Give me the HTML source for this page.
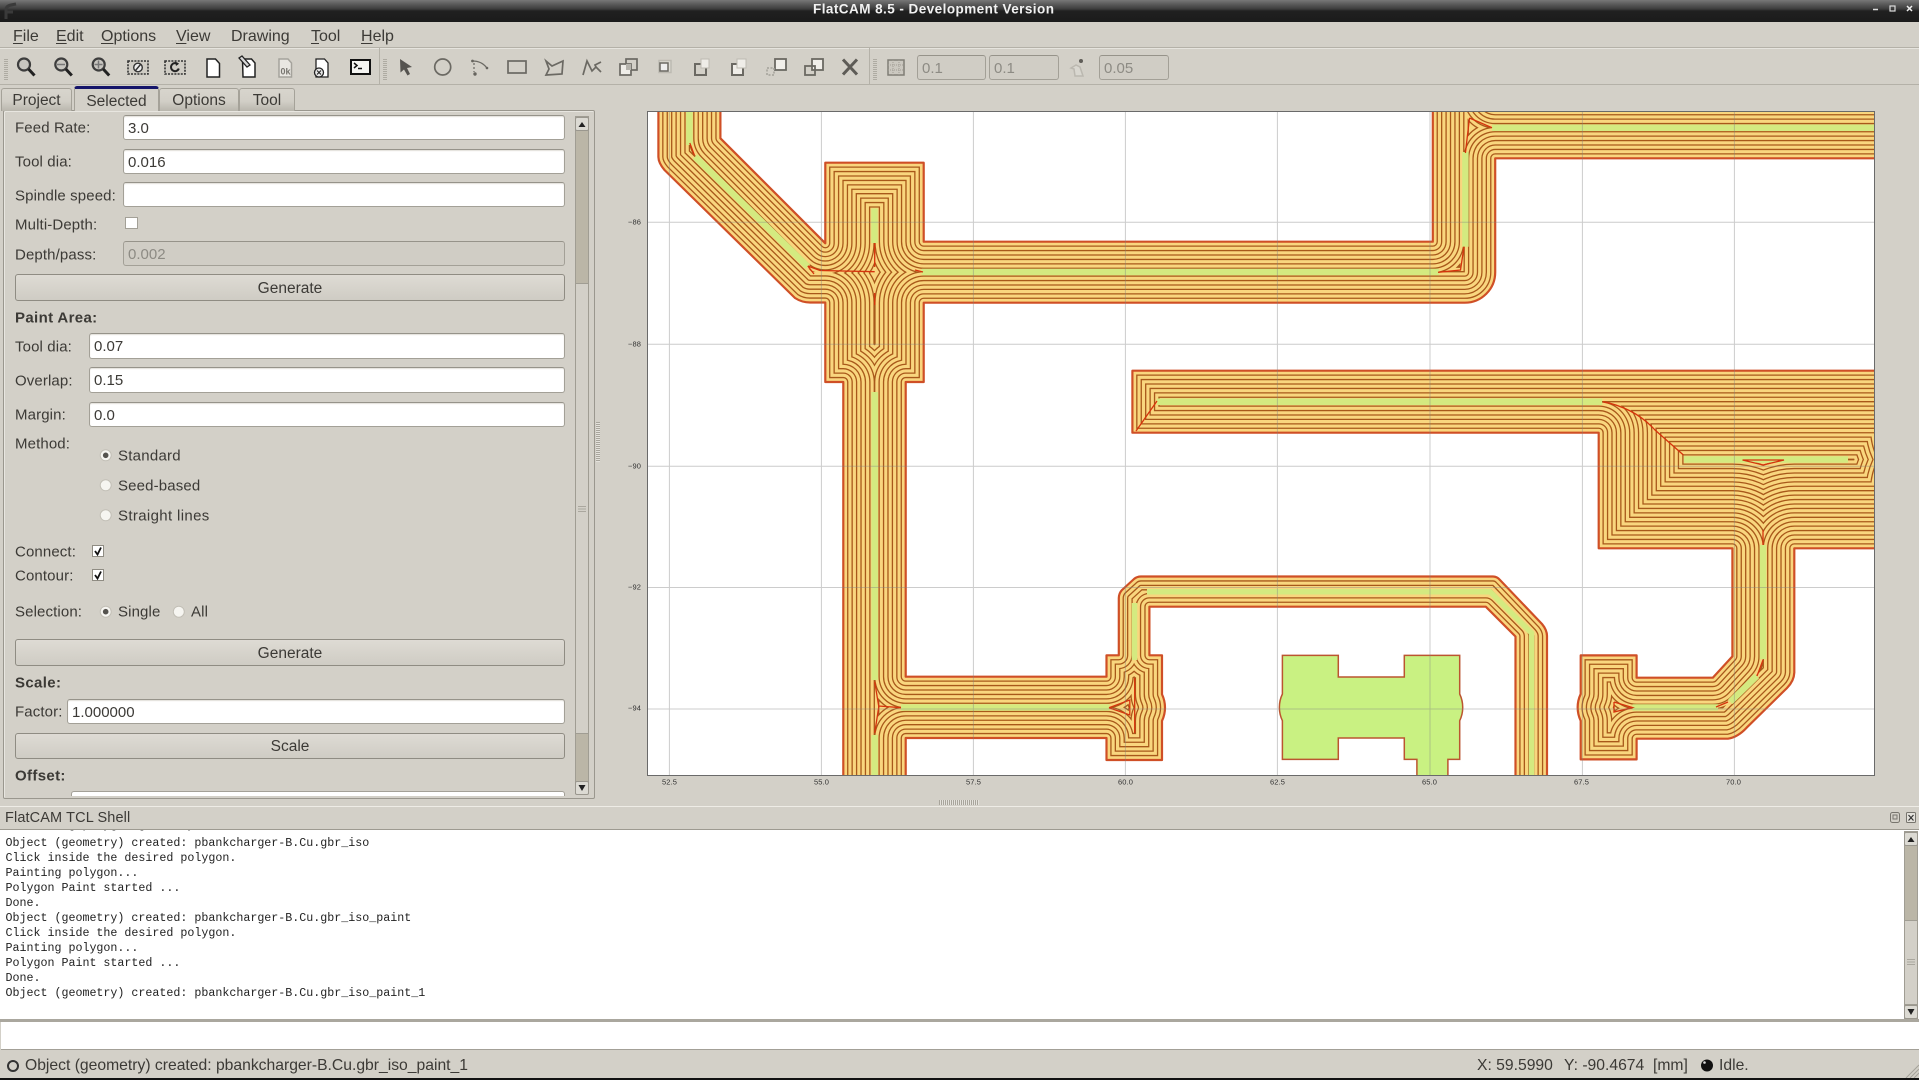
<!DOCTYPE html>
<html><head><meta charset="utf-8"><title>FlatCAM 8.5 - Development Version</title>
<style>
html,body{margin:0;padding:0;background:#d3d0c8}
body{width:1919px;height:1080px;position:relative;overflow:hidden;font-family:"Liberation Sans",sans-serif;font-size:15px;color:#3c3a36}
.a{position:absolute}
.t{position:absolute;white-space:nowrap;transform:translateY(-50%);line-height:1;margin-top:1px;letter-spacing:.12px}
.in{position:absolute;box-sizing:border-box;background:#fff;border:1px solid #a3a097;border-top-color:#96938a;border-radius:3px;padding-left:4px;padding-top:1px;color:#3c3a36;font-size:15px;display:flex;align-items:center;box-shadow:inset 0 1px 1px #e2e0da}
.in.d{background:#d0cdc5;color:#8d8b84;box-shadow:none}
.b{position:absolute;box-sizing:border-box;left:15px;width:550px;border:1px solid #8f8c83;border-radius:3px;background:linear-gradient(#dedbd4,#cfccc4);text-align:center;font-size:15.5px;padding-top:2px;display:flex;align-items:center;justify-content:center;color:#3c3a36}
.tab{position:absolute;box-sizing:border-box;top:88px;height:23px;border:1px solid #a5a299;border-bottom:0;border-radius:3px 3px 0 0;background:linear-gradient(#d8d5cd,#d2cfc7 55%,#b9b6ad);text-align:center;line-height:23px;font-size:15.5px}
b{font-weight:bold;letter-spacing:.35px}
u{text-decoration-thickness:1px;text-underline-offset:2px}
.m{position:absolute;top:37px;transform:translateY(-50%);font-size:16px;line-height:1;white-space:nowrap}
.c{position:absolute;left:5.5px;font-family:"Liberation Mono",monospace;font-size:11.67px;line-height:15px;white-space:pre;color:#222;height:15px}
.s{position:absolute;white-space:nowrap;top:1066px;transform:translateY(-50%);font-size:15.7px;line-height:1}
svg{position:absolute;display:block}
</style></head><body>

<!-- title bar -->
<div class="a" style="left:0;top:0;width:1919px;height:22px;background:linear-gradient(#777 0,#555 5px,#3c3c3c 9px,#202020 11px,#1b1b1b 100%)"></div>
<div class="t" style="left:813px;top:8px;color:#f2f2f2;font-size:13.5px;font-weight:bold;letter-spacing:.45px">FlatCAM 8.5 - Development Version</div>
<svg style="left:0;top:0" width="1919" height="22">
<path d="M6 19V10Q6 6 11 5L16 4M6 12H13" fill="none" stroke="#3a3a3a" stroke-width="3"/>
<path d="M1873 9.5h5" stroke="#ddd" stroke-width="1.5"/><rect x="1890" y="6" width="5" height="5" fill="none" stroke="#ddd" stroke-width="1.2"/>
<path d="M1907 6l5 5M1912 6l-5 5" stroke="#eee" stroke-width="1.5"/>
</svg>

<!-- menu -->
<div class="m" style="left:13px"><u>F</u>ile</div>
<div class="m" style="left:56px"><u>E</u>dit</div>
<div class="m" style="left:101px"><u>O</u>ptions</div>
<div class="m" style="left:176px"><u>V</u>iew</div>
<div class="m" style="left:231px">Drawing</div>
<div class="m" style="left:311px"><u>T</u>ool</div>
<div class="m" style="left:361px"><u>H</u>elp</div>

<!-- toolbar -->
<div class="a" style="left:0;top:47px;width:1919px;height:1px;background:#b4b1a8"></div>
<div class="a" style="left:0;top:48px;width:1919px;height:1px;background:#e6e4de"></div>
<div class="a" style="left:0;top:84px;width:1919px;height:1px;background:#b4b1a8"></div>
<div class="a" style="left:379px;top:48px;width:1px;height:36px;background:#b4b1a8"></div>
<div class="a" style="left:869px;top:48px;width:1px;height:36px;background:#b4b1a8"></div>
<svg style="left:0;top:49px" width="1919" height="35" viewBox="0 48 1919 35">
<defs>
<pattern id="gr" width="4" height="2" patternUnits="userSpaceOnUse"><rect width="4" height="1" fill="#aeaba2"/></pattern>
<g id="lens"><circle cx="-2" cy="-2.5" r="6" fill="#c8c6c0" stroke="#3d3d3d" stroke-width="2.2"/><path d="M2.5 2l6 6.5" stroke="#222" stroke-width="3"/></g>
</defs>
<rect x="4" y="57" width="4" height="22" fill="url(#gr)"/><rect x="383" y="57" width="4" height="22" fill="url(#gr)"/><rect x="873" y="57" width="4" height="22" fill="url(#gr)"/>
<use href="#lens" x="26" y="66"/><use href="#lens" x="63.3" y="66"/><use href="#lens" x="100.7" y="66"/>
<path d="M57 63.5h8" stroke="#777" stroke-width="1.5"/><path d="M94.5 63.5h8M98.5 59.5v8" stroke="#777" stroke-width="1.5"/>
<rect x="128" y="60" width="20" height="13" fill="#cfccc4" stroke="#333" stroke-width="1.6" stroke-dasharray="2 1.2"/>
<circle cx="138" cy="66.5" r="4.3" fill="#eee" stroke="#333" stroke-width="1.4"/><path d="M135.5 69.5l5-6" stroke="#333" stroke-width="1.4"/>
<rect x="165" y="60" width="20" height="13" fill="#cfccc4" stroke="#333" stroke-width="1.6" stroke-dasharray="2 1.2"/>
<path d="M178 63.5a4 4 0 1 0 .8 4" fill="none" stroke="#222" stroke-width="2"/><path d="M175 60.5l4 2-3 2.5z" fill="#222"/>
<path d="M207 58h8.500l4 4.500V76H207z" fill="#fff" stroke="#222" stroke-width="1.500"/>
<path d="M242.500 58h9l3.500 4V76h-12z" fill="#fff" stroke="#222" stroke-width="1.500"/><path d="M239 57l3-2 8 9-3 2z" fill="#d8d8d8" stroke="#222" stroke-width="1.300"/>
<path d="M279 58h9l3.500 4V76H279z" fill="#e9e7e2" stroke="#a5a39c" stroke-width="1.500"/><text x="285.500" y="73.500" text-anchor="middle" font-size="9" font-weight="bold" fill="#77756f" textLength="10" lengthAdjust="spacingAndGlyphs">0k</text>
<path d="M316 58h8.500l3.500 4V76h-12z" fill="#fff" stroke="#222" stroke-width="1.300"/><circle cx="319" cy="71.500" r="4.500" fill="#e8e8e8" stroke="#222" stroke-width="1.300"/><path d="M317 69.500l4 4M321 69.500l-4 4" stroke="#222" stroke-width="1.100"/>
<rect x="351" y="59" width="19" height="14" fill="#f5f5f2" stroke="#111" stroke-width="2"/><path d="M354 62l3 2.500-3 2.500M358 67.500h4" fill="none" stroke="#111" stroke-width="1.500"/>
<path d="M400 58l12 8-5 1 3 6-2.500 1.500-3.500-6-3.500 3z" fill="#55534f"/>
<circle cx="442.700" cy="66" r="8" fill="none" stroke="#6b6963" stroke-width="1.700"/>
<path d="M472.500 60q9 0 14 6.500" fill="none" stroke="#6b6963" stroke-width="1.300"/><path d="M474 62v9" stroke="#6b6963" stroke-width="1.200" stroke-dasharray="2 2"/><circle cx="472.500" cy="60" r="1.400" fill="#66645e"/><circle cx="475" cy="73" r="1.700" fill="#66645e"/><circle cx="487" cy="67" r="1.300" fill="#66645e"/>
<rect x="508" y="60" width="18" height="12" fill="none" stroke="#6b6963" stroke-width="1.700"/>
<path d="M546 60l6 5 11-5-1 13-16 1 3-6z" fill="none" stroke="#6b6963" stroke-width="1.700"/>
<path d="M583 74l4-14 5 10 4-4-1-2 6-3M596 66l5 5" fill="none" stroke="#6b6963" stroke-width="1.700"/>
<rect x="626" y="58" width="11" height="11" fill="#d3d0c8" stroke="#6b6963" stroke-width="1.700"/><rect x="620" y="63" width="11" height="11" fill="#efede8" stroke="#6b6963" stroke-width="1.700"/><rect x="626" y="63" width="5" height="6" fill="#b5b3ac"/>
<rect x="659" y="59.500" width="12" height="12" fill="#dcdad3" stroke="#bdbab2" stroke-width="1.500"/><rect x="660" y="62" width="8" height="8" fill="#eee" stroke="#6b6963" stroke-width="1.500"/>
<rect x="695" y="63" width="11" height="11" fill="none" stroke="#6b6963" stroke-width="2"/><rect x="701" y="58" width="8" height="9" fill="#eeece7" stroke="#bdbab2"/>
<rect x="732" y="63" width="11" height="11" fill="#efede8" stroke="#6b6963" stroke-width="2"/><rect x="737" y="58" width="9" height="9" fill="#efede8" stroke="#bdbab2"/>
<rect x="775" y="58" width="11" height="11" fill="#f1efea" stroke="#6b6963" stroke-width="1.800"/><rect x="767" y="67" width="7" height="7" fill="none" stroke="#a3a199" stroke-dasharray="2 1.500" stroke-width="1.500"/>
<rect x="812" y="58" width="11" height="11" fill="#f1efea" stroke="#6b6963" stroke-width="1.800"/><rect x="805" y="65" width="10" height="9" fill="none" stroke="#6b6963" stroke-width="1.800"/>
<path d="M843 58.500l14 15M857 58.500l-14 15" stroke="#5e5c57" stroke-width="3"/>
<rect x="888" y="59" width="16" height="15" fill="#cbc8c0" stroke="#807d75" stroke-width="1.500"/><path d="M888 64h16M888 69h16M893 59v15M899 59v15" stroke="#a09d95" stroke-dasharray="1 1"/>
<path d="M1076 64l-5 3 3 1 1 7h8l-3-9z" fill="#d9d7d0" stroke="#bbb8b0" stroke-width="1.500"/><circle cx="1081" cy="60" r="2" fill="#5f5d58"/>
</svg>
<div class="in d" style="left:917px;top:55px;width:69px;height:25px;padding-left:4px">0.1</div>
<div class="in d" style="left:989px;top:55px;width:70px;height:25px;padding-left:4px">0.1</div>
<div class="in d" style="left:1099px;top:55px;width:70px;height:25px;padding-left:4px">0.05</div>

<!-- tabs -->
<div class="a" style="left:3px;top:110px;width:592px;height:689px;box-sizing:border-box;border:1px solid #9a978e;border-radius:2px;box-shadow:inset 1px 1px 0 #e8e6e0"></div>
<div class="tab" style="left:1px;width:71px">Project</div>
<div class="tab" style="left:74px;width:85px;top:86px;height:25px;line-height:25px;background:#d3d0c8;border-top:3px solid #15156a;z-index:2">Selected</div>
<div class="tab" style="left:159px;width:80px">Options</div>
<div class="tab" style="left:239px;width:56px">Tool</div>

<!-- form -->
<div class="t" style="left:15px;top:127px">Feed Rate:</div><div class="in" style="left:123px;top:115px;width:442px;height:25px">3.0</div>
<div class="t" style="left:15px;top:161px">Tool dia:</div><div class="in" style="left:123px;top:149px;width:442px;height:25px">0.016</div>
<div class="t" style="left:15px;top:195px">Spindle speed:</div><div class="in" style="left:123px;top:182px;width:442px;height:25px"></div>
<div class="t" style="left:15px;top:224px">Multi-Depth:</div>
<div class="a" style="left:125px;top:217px;width:13px;height:12px;box-sizing:border-box;background:#fff;border:1px solid #a3a097"></div>
<div class="t" style="left:15px;top:254px">Depth/pass:</div><div class="in d" style="left:123px;top:241px;width:442px;height:25px">0.002</div>
<div class="b" style="top:274px;height:27px">Generate</div>
<div class="t" style="left:15px;top:317px"><b>Paint Area:</b></div>
<div class="t" style="left:15px;top:346px">Tool dia:</div><div class="in" style="left:89px;top:333px;width:476px;height:26px">0.07</div>
<div class="t" style="left:15px;top:380px">Overlap:</div><div class="in" style="left:89px;top:367px;width:476px;height:26px">0.15</div>
<div class="t" style="left:15px;top:414px">Margin:</div><div class="in" style="left:89px;top:402px;width:476px;height:25px">0.0</div>
<div class="t" style="left:15px;top:443px">Method:</div>
<div class="t" style="left:118px;top:455px;letter-spacing:.25px">Standard</div><div class="t" style="left:118px;top:485px;letter-spacing:.15px">Seed-based</div><div class="t" style="left:118px;top:515px;letter-spacing:.35px">Straight lines</div>
<div class="t" style="left:15px;top:551px">Connect:</div>
<div class="t" style="left:15px;top:575px">Contour:</div>
<div class="t" style="left:15px;top:611px">Selection:</div><div class="t" style="left:118px;top:611px">Single</div><div class="t" style="left:191px;top:611px">All</div>
<svg style="left:0;top:440px" width="300" height="190" viewBox="0 440 300 190">
<g fill="#f6f5f1" stroke="#c2bfb6"><circle cx="105.700" cy="455.300" r="5.500"/><circle cx="105.700" cy="485.300" r="5.500"/><circle cx="105.700" cy="515.300" r="5.500"/><circle cx="105.700" cy="611.700" r="5.500"/><circle cx="178.800" cy="611.700" r="5.500"/></g>
<circle cx="105.700" cy="455.300" r="2.800" fill="#55534f"/><circle cx="105.700" cy="611.700" r="2.800" fill="#55534f"/>
<rect x="92.500" y="545.500" width="11" height="11" fill="#fff" stroke="#8f8c83"/><rect x="92.500" y="569.500" width="11" height="11" fill="#fff" stroke="#8f8c83"/>
<path d="M95 551l2.500 3.500 3.500-7M95 575l2.500 3.500 3.500-7" fill="none" stroke="#111" stroke-width="1.800"/>
</svg>
<div class="b" style="top:639px;height:27px">Generate</div>
<div class="t" style="left:15px;top:682px"><b>Scale:</b></div>
<div class="t" style="left:15px;top:711px">Factor:</div><div class="in" style="left:67px;top:699px;width:498px;height:25px">1.000000</div>
<div class="b" style="top:733px;height:26px">Scale</div>
<div class="t" style="left:15px;top:775px"><b>Offset:</b></div>
<div class="a" style="left:71px;top:791px;width:494px;height:5px;background:#fff;border:1px solid #a3a097;border-bottom:0;box-sizing:border-box;border-radius:3px 3px 0 0"></div>

<!-- left scrollbar -->
<div class="a" style="left:575px;top:116px;width:14px;height:678px;background:#bbb6a7;border:1px solid #a09d93;box-sizing:border-box"></div>
<div class="a" style="left:575px;top:283px;width:14px;height:451px;background:#d3d0c8;border:1px solid #a09d93;box-sizing:border-box"></div>
<div class="a" style="left:575px;top:117px;width:14px;height:14px;background:#dcdad3;border:1px solid #9a978e;box-sizing:border-box;border-radius:2px"></div>
<div class="a" style="left:575px;top:781px;width:14px;height:14px;background:#dcdad3;border:1px solid #9a978e;box-sizing:border-box;border-radius:2px"></div>
<svg style="left:575px;top:117px" width="14" height="678" viewBox="575 117 14 678"><path d="M578.500 127l3.500-5 3.500 5zM578.500 785l3.500 6 3.500-6z" fill="#222"/><path d="M578 506.500h8M578 509h8M578 511.500h8" stroke="#aaa79e"/></svg>

<!-- splitter grips -->
<div class="a" style="left:596px;top:422px;width:4px;height:40px;background:repeating-linear-gradient(#a8a59c 0 1px,#e4e2dc 1px 2px)"></div>
<div class="a" style="left:939px;top:800px;width:40px;height:5px;background:repeating-linear-gradient(90deg,#a8a59c 0 1px,#e4e2dc 1px 2px)"></div>

<!-- plot -->
<div class="a" style="left:647px;top:111px;width:1228px;height:665px;box-sizing:border-box;border:1px solid #6a6a6a;background:#fff"></div>
<svg style="left:648px;top:112px" width="1226" height="663" viewBox="648 112 1226 663">
<defs>
<path id="o1" fill="none" stroke-linejoin="round" d="M658.400 -100V157Q658.500 163 664.500 170L795 298Q802 302.500 810 302.500H825.300V382H843.300V900H905.700V738H1106.500V760H1162V720.900A31 31 0 0 0 1162 694.300V655.300H1149.400V606.700H1485.800L1515.500 636.500V900H1547V636Q1547 630 1542 624L1500 580Q1497 576.500 1493 576.500H1141Q1137 576.500 1134 579L1122 590Q1119 593 1118.800 598V655.300H1106.500V676.700H905.700V382H923.700V302.700H1464.800A30.500 30.500 0 0 0 1495.200 272.200V158.300H2200V97H1495V-100H1432.800V241.700H923.700V162.700H825.300V243.300L720.400 138.300V-100Z"/>
<path id="o2" fill="none" stroke-linejoin="round" d="M1132.400 370.700H1937V429A40 40 0 0 1 1937 490V548.300H1794.300V672.600Q1794 681 1787 688L1746.600 727.700Q1738 737 1728 738.700H1636.600V759.400H1580.700V720.800A31 31 0 0 1 1580.700 694V655.400H1636.600V677.700H1712.800L1732.400 656.400V548.300H1598.700V432.700H1132.400Z"/>
<clipPath id="c1"><use href="#o1"/></clipPath>
<clipPath id="c2"><use href="#o2"/></clipPath>
</defs>
<g clip-path="url(#c1)"><rect x="648" y="100" width="1230" height="680" fill="#f9d67e"/>
<use href="#o1" stroke="#a8581a" stroke-width="107.620"/><use href="#o1" stroke="#f9d67e" stroke-width="105.020"/>
<use href="#o1" stroke="#a8581a" stroke-width="98.760"/><use href="#o1" stroke="#f9d67e" stroke-width="96.160"/>
<use href="#o1" stroke="#a8581a" stroke-width="89.900"/><use href="#o1" stroke="#f9d67e" stroke-width="87.300"/>
<use href="#o1" stroke="#a8581a" stroke-width="81.040"/><use href="#o1" stroke="#f9d67e" stroke-width="78.440"/>
<use href="#o1" stroke="#a8581a" stroke-width="72.180"/><use href="#o1" stroke="#f9d67e" stroke-width="69.580"/>
<use href="#o1" stroke="#a8581a" stroke-width="63.320"/><use href="#o1" stroke="#f9d67e" stroke-width="60.720"/>
<use href="#o1" stroke="#a8581a" stroke-width="54.460"/><use href="#o1" stroke="#f9d67e" stroke-width="51.860"/>
<use href="#o1" stroke="#a8581a" stroke-width="45.600"/><use href="#o1" stroke="#f9d67e" stroke-width="43"/>
<use href="#o1" stroke="#a8581a" stroke-width="36.740"/><use href="#o1" stroke="#f9d67e" stroke-width="34.140"/>
<use href="#o1" stroke="#a8581a" stroke-width="27.880"/><use href="#o1" stroke="#f9d67e" stroke-width="25.280"/>
<use href="#o1" stroke="#a8581a" stroke-width="19.020"/><use href="#o1" stroke="#f9d67e" stroke-width="16.420"/>
<use href="#o1" stroke="#a8581a" stroke-width="10.160"/><use href="#o1" stroke="#f9d67e" stroke-width="7.560"/>
</g>
<g clip-path="url(#c2)"><rect x="1100" y="360" width="800" height="420" fill="#f9d67e"/>
<use href="#o2" stroke="#a8581a" stroke-width="178.500"/><use href="#o2" stroke="#f9d67e" stroke-width="175.900"/>
<use href="#o2" stroke="#a8581a" stroke-width="169.640"/><use href="#o2" stroke="#f9d67e" stroke-width="167.040"/>
<use href="#o2" stroke="#a8581a" stroke-width="160.780"/><use href="#o2" stroke="#f9d67e" stroke-width="158.180"/>
<use href="#o2" stroke="#a8581a" stroke-width="151.920"/><use href="#o2" stroke="#f9d67e" stroke-width="149.320"/>
<use href="#o2" stroke="#a8581a" stroke-width="143.060"/><use href="#o2" stroke="#f9d67e" stroke-width="140.460"/>
<use href="#o2" stroke="#a8581a" stroke-width="134.200"/><use href="#o2" stroke="#f9d67e" stroke-width="131.600"/>
<use href="#o2" stroke="#a8581a" stroke-width="125.340"/><use href="#o2" stroke="#f9d67e" stroke-width="122.740"/>
<use href="#o2" stroke="#a8581a" stroke-width="116.480"/><use href="#o2" stroke="#f9d67e" stroke-width="113.880"/>
<use href="#o2" stroke="#a8581a" stroke-width="107.620"/><use href="#o2" stroke="#f9d67e" stroke-width="105.020"/>
<use href="#o2" stroke="#a8581a" stroke-width="98.760"/><use href="#o2" stroke="#f9d67e" stroke-width="96.160"/>
<use href="#o2" stroke="#a8581a" stroke-width="89.900"/><use href="#o2" stroke="#f9d67e" stroke-width="87.300"/>
<use href="#o2" stroke="#a8581a" stroke-width="81.040"/><use href="#o2" stroke="#f9d67e" stroke-width="78.440"/>
<use href="#o2" stroke="#a8581a" stroke-width="72.180"/><use href="#o2" stroke="#f9d67e" stroke-width="69.580"/>
<use href="#o2" stroke="#a8581a" stroke-width="63.320"/><use href="#o2" stroke="#f9d67e" stroke-width="60.720"/>
<use href="#o2" stroke="#a8581a" stroke-width="54.460"/><use href="#o2" stroke="#f9d67e" stroke-width="51.860"/>
<use href="#o2" stroke="#a8581a" stroke-width="45.600"/><use href="#o2" stroke="#f9d67e" stroke-width="43"/>
<use href="#o2" stroke="#a8581a" stroke-width="36.740"/><use href="#o2" stroke="#f9d67e" stroke-width="34.140"/>
<use href="#o2" stroke="#a8581a" stroke-width="27.880"/><use href="#o2" stroke="#f9d67e" stroke-width="25.280"/>
<use href="#o2" stroke="#a8581a" stroke-width="19.020"/><use href="#o2" stroke="#f9d67e" stroke-width="16.420"/>
<use href="#o2" stroke="#a8581a" stroke-width="10.160"/><use href="#o2" stroke="#f9d67e" stroke-width="7.560"/>
</g>
<!-- outlines -->
<use href="#o1" stroke="#cf4f26" stroke-width="2.200"/><use href="#o2" stroke="#cf4f26" stroke-width="2.200"/>
<!-- green centre strips -->
<g fill="none" stroke="#d4ea80" stroke-width="6.500">
<path d="M689.400 100V145M695 156.700L807.800 266.700"/>
<path d="M874.500 208.500V243"/>
<path d="M921.600 272H1439"/>
<path d="M1465.400 152V246.700"/>
<path d="M1492 127.700H1880"/>
<path d="M1157 401.700H1602"/>
<path d="M1684 459.500H1848"/>
<path d="M1763 545V659"/>
<path d="M1756.800 676L1730.300 701.800"/>
<path d="M1632.500 707.500H1718"/>
<path d="M901 707.500H1109.400"/>
<path d="M874.700 392V680M874.700 735V780"/>
</g>
<g fill="none" stroke="#d4ea80" stroke-width="5.500">
<path d="M1134.500 603V660"/>
<path d="M1147 591.700H1490L1531.500 633V780"/>
</g>
<!-- red medial lines -->
<g fill="none" stroke="#d6330c" stroke-width="1.300">
<path d="M689.800 143L694.300 155"/>
<path d="M807.800 266L820 270.500L874.700 271.700M807.800 266L814 274"/>
<path d="M874.700 243V267M874.700 293V305M915 270L923 272"/>
<path d="M1469.500 118L1465.400 153M1469.500 118L1492 127.700"/>
<path d="M1464 246.700L1460.500 270L1438 272.300"/>
<path d="M1603 401.700Q1635 408 1655 430L1683.400 455"/>
<path d="M1742.500 460L1763 465L1784 460H1742.500"/>
<path d="M1763 545V530"/>
<path d="M874.700 681.700L878.800 706.700L874.700 733M878.800 706L901 707.700"/>
<path d="M1109 707.700L1129.800 700V715L1109 707.700M1134.700 678V733"/>
<path d="M1614 702V712L1632.500 707.500L1614 702"/>
<path d="M1716 707L1728 702M1757 676L1763 660"/>
<path d="M1136 431L1157 401"/>
</g>
<!-- unpainted polygon -->
<path d="M1282.400 655.400H1338.300V677H1404.300V655.400H1459.700V694A31 31 0 0 1 1459.700 720.700V759.400H1447.900V800H1416.900V759.400H1404.300V738H1338.300V759.400H1282.400V720.700A31 31 0 0 1 1282.400 694Z" fill="#c9f182" stroke="#bb5530" stroke-width="1.500"/>
<!-- grid above all, semi transparent -->
<path d="M669.400 112V775M821.400 112V775M973.400 112V775M1125.400 112V775M1277.400 112V775M1430 112V775M1582.400 112V775M1734.400 112V775M648 222.300H1874M648 344.300H1874M648 466.300H1874M648 587.500H1874M648 709H1874" stroke="#808080" stroke-opacity=".4" fill="none"/>
</svg>
<!-- axis labels -->
<div class="a" style="left:0;top:0;font-size:7.500px;color:#333">
<div class="t" style="left:628px;top:221px">−86</div>
<div class="t" style="left:628px;top:343px">−88</div>
<div class="t" style="left:628px;top:465px">−90</div>
<div class="t" style="left:628px;top:586px">−92</div>
<div class="t" style="left:628px;top:707px">−94</div>
<div class="t" style="left:662px;top:781px">52.5</div>
<div class="t" style="left:814px;top:781px">55.0</div>
<div class="t" style="left:966px;top:781px">57.5</div>
<div class="t" style="left:1118px;top:781px">60.0</div>
<div class="t" style="left:1270px;top:781px">62.5</div>
<div class="t" style="left:1422px;top:781px">65.0</div>
<div class="t" style="left:1574px;top:781px">67.5</div>
<div class="t" style="left:1726px;top:781px">70.0</div>
</div>

<!-- dock -->
<div class="a" style="left:0;top:806px;width:1919px;height:1px;background:#eeece6"></div>
<div class="t" style="left:5px;top:817px;font-size:14.500px">FlatCAM TCL Shell</div>
<svg style="left:1885px;top:808px" width="34" height="18" viewBox="1885 808 34 18">
<rect x="1890.500" y="812.500" width="9" height="10" rx="2" fill="none" stroke="#77756e"/><rect x="1893" y="815" width="4" height="4" fill="none" stroke="#77756e"/>
<rect x="1906.500" y="812.500" width="9" height="10" rx="1" fill="#e4e2dc" stroke="#77756e"/><path d="M1908.500 815l5 5.500M1913.500 815l-5 5.500" stroke="#333" stroke-width="1.200"/>
</svg>
<div class="a" style="left:0;top:829px;width:1919px;height:192px;background:#fff;border-top:1px solid #9d9a91;box-sizing:border-box;overflow:hidden">
<div class="c" style="top:-12px">Generating polygon geometry ...</div>
<div class="c" style="top:6px">Object (geometry) created: pbankcharger-B.Cu.gbr_iso</div>
<div class="c" style="top:21px">Click inside the desired polygon.</div>
<div class="c" style="top:36px">Painting polygon...</div>
<div class="c" style="top:51px">Polygon Paint started ...</div>
<div class="c" style="top:66px">Done.</div>
<div class="c" style="top:81px">Object (geometry) created: pbankcharger-B.Cu.gbr_iso_paint</div>
<div class="c" style="top:96px">Click inside the desired polygon.</div>
<div class="c" style="top:111px">Painting polygon...</div>
<div class="c" style="top:126px">Polygon Paint started ...</div>
<div class="c" style="top:141px">Done.</div>
<div class="c" style="top:156px">Object (geometry) created: pbankcharger-B.Cu.gbr_iso_paint_1</div>
</div>
<div class="a" style="left:0;top:1019px;width:1919px;height:3px;background:#aaa79e"></div>
<div class="a" style="left:1px;top:1022px;width:1918px;height:28px;background:#fff;border-bottom:1px solid #a3a097;box-sizing:border-box"></div>
<!-- console scrollbar -->
<div class="a" style="left:1904px;top:831px;width:14px;height:188px;background:#bbb6a7;border:1px solid #a09d93;box-sizing:border-box"></div>
<div class="a" style="left:1904px;top:920px;width:14px;height:85px;background:#d3d0c8;border:1px solid #a09d93;box-sizing:border-box"></div>
<div class="a" style="left:1904px;top:832px;width:14px;height:14px;background:#dcdad3;border:1px solid #9a978e;box-sizing:border-box;border-radius:2px"></div>
<div class="a" style="left:1904px;top:1005px;width:14px;height:14px;background:#dcdad3;border:1px solid #9a978e;box-sizing:border-box;border-radius:2px"></div>
<svg style="left:1904px;top:832px" width="14" height="187" viewBox="1904 832 14 187"><path d="M1907.500 842l3.500-5 3.500 5zM1907.500 1009l3.500 6 3.500-6z" fill="#222"/><path d="M1907 959.500h8M1907 962h8M1907 964.500h8" stroke="#aaa79e"/></svg>

<!-- status bar -->
<svg style="left:0;top:1055px" width="30" height="22" viewBox="0 1055 30 22"><circle cx="13" cy="1066" r="5" fill="none" stroke="#333" stroke-width="2"/></svg>
<div class="s" style="left:25px">Object (geometry) created: pbankcharger-B.Cu.gbr_iso_paint_1</div>
<div class="s" style="left:1477px">X: 59.5990</div>
<div class="s" style="left:1564px">Y: -90.4674</div>
<div class="s" style="left:1653px">[mm]</div>
<svg style="left:1698px;top:1056px" width="18" height="20" viewBox="1698 1056 18 20"><circle cx="1707" cy="1065.500" r="6" fill="#111"/><circle cx="1704.500" cy="1062.500" r="1.300" fill="#ddd"/></svg>
<div class="s" style="left:1719px">Idle.</div>
<svg style="left:1905px;top:1064px" width="14" height="14"><path d="M1 14L14 1M5 14L14 5M9 14L14 9" stroke="#a5a29a"/></svg>
<div class="a" style="left:0;top:1078px;width:1919px;height:2px;background:#111"></div>
</body></html>
